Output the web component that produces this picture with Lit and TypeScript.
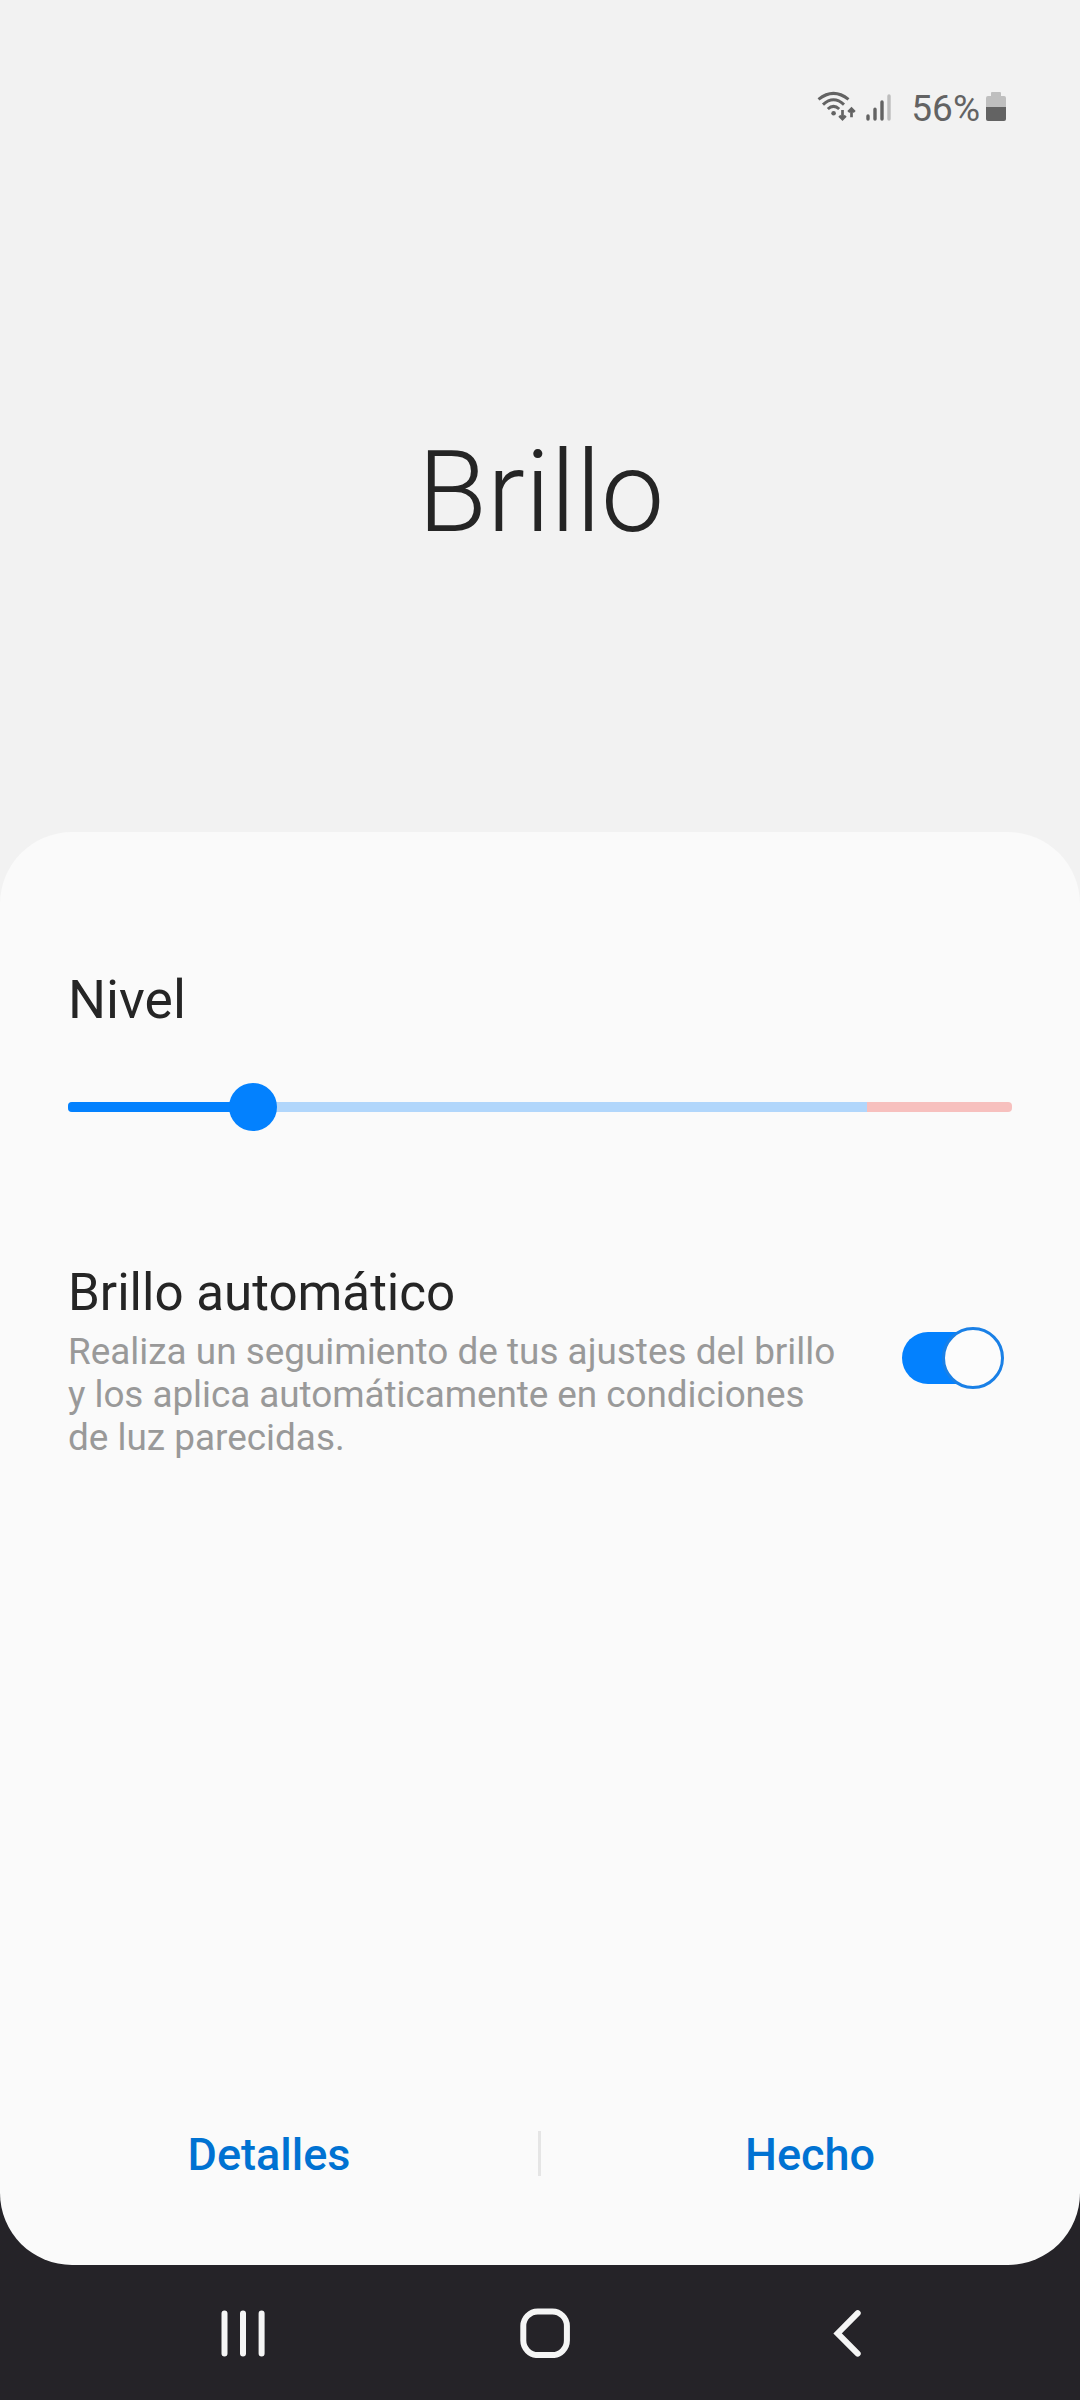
import { LitElement, html, css } from "lit";
import { customElement, property, state } from "lit/decorators.js";

@customElement("status-bar")
class StatusBar extends LitElement {
  static styles = css`
    :host { display: flex; justify-content: flex-end; align-items: flex-start; padding: 86px 74px 0 0; height: 44px; color: #636363; }
    svg { display: block; flex: none; }
    .wifi { margin-top: 5px; }
    .signal { margin: 7px 0 0 10px; }
    .percent { font-size: 37px; line-height: 44px; margin: 1px 0 0 20px; }
    .battery { margin: 6px 0 0 6px; }
  `;
  render() {
    return html`
      <svg class="wifi" width="39" height="32" viewBox="0 0 39 32" fill="none" stroke="currentColor" stroke-width="3">
        <path d="M1.5 8.4Q16.5-3.6 31.5 8.4M6 13.6Q16.5 4 27 13.6M10.8 18Q16.5 12.8 22.2 18" />
        <circle cx="16.6" cy="22.3" r="2.3" fill="currentColor" stroke="none" />
        <path stroke-width="2.7" d="M25.5 19V28M22.3 24.8L25.5 28.1L28.7 24.8M34.5 26.3V17.8M31.3 21L34.5 17.7L37.7 21" />
      </svg>
      <svg class="signal" width="25" height="29" viewBox="0 0 25 29" stroke="currentColor" stroke-width="3.4" stroke-linecap="round">
        <path d="M2 23V26.1M9 16.3V26.1M16 9V26.1" />
        <path d="M23 3V26.1" stroke="#bdbdbd" />
      </svg>
      <span class="percent">56%</span>
      <svg class="battery" width="20" height="29" viewBox="0 0 20 29">
        <path d="M6 0H14Q15 0 15 1V4H18Q20 4 20 6V15H0V6Q0 4 2 4H5V1Q5 0 6 0Z" fill="#bfbfbf" />
        <path d="M0 15H20V27Q20 29 18 29H2Q0 29 0 27Z" fill="currentColor" />
      </svg>
    `;
  }
}

@customElement("brightness-slider")
class BrightnessSlider extends LitElement {
  @property({ type: Number }) value = 19.6;
  static styles = css`
    :host { display: block; }
    .track { position: relative; height: 10px; border-radius: 4px; background: linear-gradient(to right, #b1d6fb 0 799px, #f7c0be 799px); }
    .fill { height: 10px; border-radius: 4px; background: #0381fe; }
    .thumb { position: absolute; top: -19px; width: 48px; height: 48px; margin-left: -24px; border-radius: 50%; background: #0381fe; }
  `;
  render() {
    return html`<div class="track">
      <div class="fill" style="width:${this.value}%"></div>
      <div class="thumb" style="left:${this.value}%"></div>
    </div>`;
  }
}

@customElement("toggle-switch")
class ToggleSwitch extends LitElement {
  @property({ type: Boolean, reflect: true }) on = false;
  static styles = css`
    :host { display: flex; align-items: center; width: 102px; height: 62px; }
    .track { box-sizing: border-box; display: flex; align-items: center; justify-content: flex-start; width: 94px; height: 52px; border-radius: 26px; background: #9a9a9a; }
    .thumb { box-sizing: border-box; flex: none; width: 62px; height: 62px; border: 3px solid #8a8a8a; border-radius: 50%; background: #fcfcfc; }
    :host([on]) .track { justify-content: flex-end; background: #0381fe; }
    :host([on]) .thumb { margin-right: -8px; border-color: #1a80e6; }
  `;
  render() {
    return html`<div class="track"><div class="thumb"></div></div>`;
  }
}

@customElement("nav-bar")
class NavBar extends LitElement {
  static styles = css`
    :host { display: flex; justify-content: center; align-items: center; gap: 252px; height: 135px; padding-left: 10px; box-sizing: border-box; }
    svg { display: block; flex: none; width: 50px; height: 50px; fill: none; stroke: #f5f5f5; stroke-width: 6; }
  `;
  render() {
    return html`
      <svg viewBox="0 0 50 50" stroke-linecap="round"><path d="M6.5 5.5V45.5M25 5.5V45.5M43.6 5.5V45.5" /></svg>
      <svg viewBox="0 0 50 50"><rect x="3.3" y="3.5" width="43.6" height="43.6" rx="14.5" /></svg>
      <svg viewBox="0 0 50 50" stroke-linecap="round"><path d="M35.7 5.2L15.6 25.4L35.7 45.6" /></svg>
    `;
  }
}

@customElement("app-root")
class AppRoot extends LitElement {
  @state() auto = true;
  static styles = css`
    :host { display: block; width: 1080px; height: 2400px; overflow: hidden; background: #252328; color: #252525; font-family: Roboto, "Noto Sans", sans-serif; }
    .page { display: flex; flex-direction: column; height: 2400px; }
    .top { background: #f2f2f2; height: 904px; margin-bottom: -72px; flex: none; }
    h1 { margin: 293px 0 0; padding-left: 2px; text-align: center; font-size: 112.8px; line-height: 140px; font-weight: 300; }
    .sheet { flex: 1; display: flex; flex-direction: column; box-sizing: border-box; padding: 136px 68px 61px; border-radius: 72px; background: #fafafa; }
    h2 { margin: 0; font-weight: 400; }
    .level { font-size: 53.4px; line-height: 64px; }
    brightness-slider { margin-top: 70px; }
    .setting { display: flex; align-items: flex-start; justify-content: space-between; margin-top: 151px; padding-right: 8px; }
    toggle-switch { margin-top: 64px; }
    .name { font-size: 51.1px; line-height: 60px; }
    .desc { width: 780px; margin: 7px 0 0; font-size: 36.9px; line-height: 43px; color: #999; }
    .tight { letter-spacing: -0.06px; }
    .actions { display: grid; grid-template-columns: 538px 3px 538px; align-items: center; margin: auto -68px 0; height: 102px; text-align: center; color: #0072d2; font-size: 45px; line-height: 60px; font-weight: 500; }
    .actions span { padding-top: 3px; }
    .rule { height: 45px; background: #e5e5e5; }
  `;
  render() {
    return html`<div class="page">
      <header class="top">
        <status-bar></status-bar>
        <h1>Brillo</h1>
      </header>
      <main class="sheet">
        <h2 class="level">Nivel</h2>
        <brightness-slider></brightness-slider>
        <section class="setting">
          <div>
            <h2 class="name">Brillo automático</h2>
            <p class="desc">Realiza un seguimiento de tus ajustes del brillo<br /><span class="tight">y los aplica automáticamente en condiciones</span><br />de luz parecidas.</p>
          </div>
          <toggle-switch ?on=${this.auto} @click=${() => (this.auto = !this.auto)}></toggle-switch>
        </section>
        <footer class="actions"><span>Detalles</span><i class="rule"></i><span>Hecho</span></footer>
      </main>
      <nav-bar></nav-bar>
    </div>`;
  }
}
